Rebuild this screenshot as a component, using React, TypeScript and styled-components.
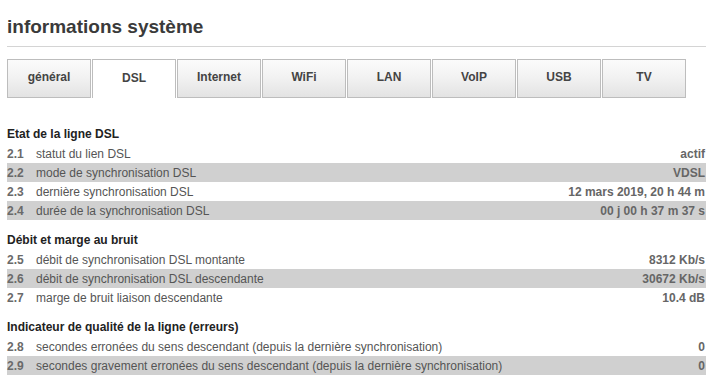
import React from "react";
import styled, { createGlobalStyle } from "styled-components";

const Global = createGlobalStyle`
  html, body { margin: 0; padding: 0; background: #fff; }
  body { font-family: "Liberation Sans", Arial, Helvetica, sans-serif; }
`;

const Page = styled.div`
  width: 699px;
  padding-left: 7px;
`;

const Title = styled.h1`
  margin: 0;
  padding-top: 15px;
  padding-bottom: 7px;
  height: 24px;
  font-size: 19px;
  line-height: 24px;
  font-weight: bold;
  color: #3a3a3a;
  border-bottom: 1px solid #d4d4d4;
`;

const Tabs = styled.div`
  display: grid;
  grid-template-columns: repeat(8, 84px);
  column-gap: 1px;
  margin-top: 12px;
`;

const Tab = styled.div<{ $active?: boolean }>`
  box-sizing: border-box;
  height: 39px;
  display: flex;
  align-items: center;
  justify-content: center;
  padding-bottom: 3px;
  font-size: 12px;
  font-weight: bold;
  color: #444;
  border: 1px solid #bdbdbd;
  border-bottom: ${(p) => (p.$active ? "none" : "1px solid #bdbdbd")};
  background: ${(p) =>
    p.$active ? "#fff" : "linear-gradient(to bottom, #fbfbfb 0%, #f1f1f1 50%, #e3e3e3 100%)"};
`;

const Section = styled.section<{ $first?: boolean }>`
  margin-top: ${(p) => (p.$first ? "26px" : "10px")};
`;

const SectionTitle = styled.h2`
  margin: 0;
  height: 20px;
  font-size: 12px;
  line-height: 20px;
  font-weight: bold;
  color: #222;
`;

const Row = styled.div<{ $shaded?: boolean }>`
  display: flex;
  align-items: center;
  height: 19px;
  font-size: 12px;
  background: ${(p) => (p.$shaded ? "#d0d0d0" : "transparent")};
`;

const Num = styled.span`
  width: 29px;
  font-weight: bold;
  color: #6a6a6a;
`;

const Label = styled.span`
  flex: 1;
  color: #555;
`;

const Value = styled.span`
  font-weight: bold;
  color: #666;
  padding-right: 1px;
`;

const tabs = ["général", "DSL", "Internet", "WiFi", "LAN", "VoIP", "USB", "TV"];

const sections = [
  {
    title: "Etat de la ligne DSL",
    rows: [
      ["2.1", "statut du lien DSL", "actif"],
      ["2.2", "mode de synchronisation DSL", "VDSL"],
      ["2.3", "dernière synchronisation DSL", "12 mars 2019, 20 h 44 m"],
      ["2.4", "durée de la synchronisation DSL", "00 j 00 h 37 m 37 s"],
    ],
  },
  {
    title: "Débit et marge au bruit",
    rows: [
      ["2.5", "débit de synchronisation DSL montante", "8312 Kb/s"],
      ["2.6", "débit de synchronisation DSL descendante", "30672 Kb/s"],
      ["2.7", "marge de bruit liaison descendante", "10.4 dB"],
    ],
  },
  {
    title: "Indicateur de qualité de la ligne (erreurs)",
    rows: [
      ["2.8", "secondes erronées du sens descendant (depuis la dernière synchronisation)", "0"],
      [
        "2.9",
        "secondes gravement erronées du sens descendant (depuis la dernière synchronisation)",
        "0",
      ],
    ],
  },
];

export default function App() {
  return (
    <>
      <Global />
      <Page>
        <Title>informations système</Title>
        <Tabs>
          {tabs.map((t) => (
            <Tab key={t} $active={t === "DSL"}>
              {t}
            </Tab>
          ))}
        </Tabs>
        {sections.map((s, si) => (
          <Section key={s.title} $first={si === 0}>
            <SectionTitle>{s.title}</SectionTitle>
            {s.rows.map((r, i) => (
              <Row key={r[0]} $shaded={i % 2 === 1}>
                <Num>{r[0]}</Num>
                <Label>{r[1]}</Label>
                <Value>{r[2]}</Value>
              </Row>
            ))}
          </Section>
        ))}
      </Page>
    </>
  );
}
